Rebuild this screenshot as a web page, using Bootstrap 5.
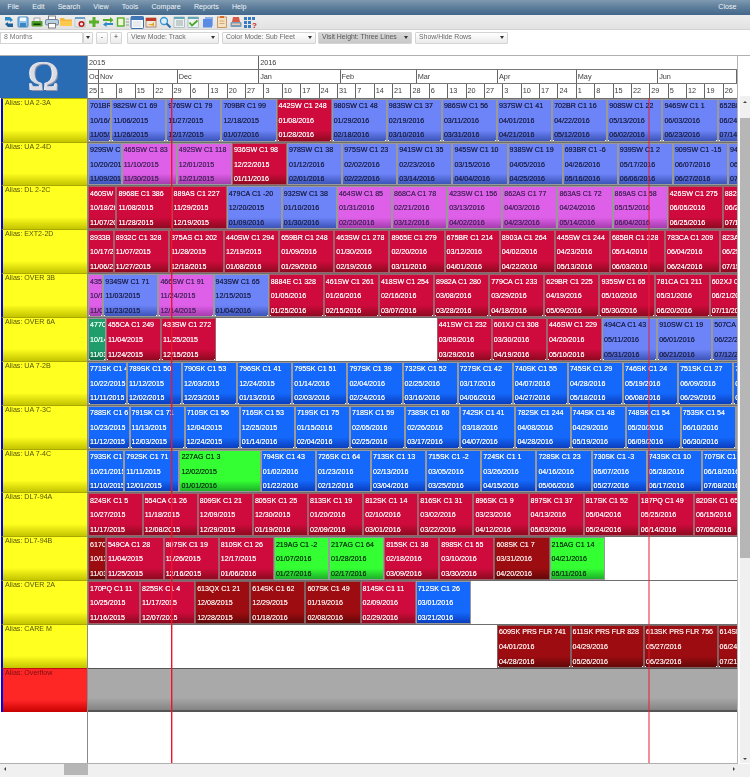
<!DOCTYPE html>
<html lang="en">

<head>
  <meta charset="UTF-8">
  <meta name="viewport" content="width=device-width, initial-scale=1">
  <title>Fleet Plan</title>

  <link href="https://cdn.jsdelivr.net/npm/bootstrap@5.3.0/dist/css/bootstrap.min.css" rel="stylesheet">

  <style>
    html, body {
      margin: 0;
      height: 777px;
      overflow: hidden;
      background: #fff;
      font-family: "Liberation Sans", Arial, sans-serif;
    }

    .app-shell {
      width: 750px;
      height: 777px;
      font-size: 7.1px;
      line-height: 1;
      filter: blur(.2px);
    }

    /* menu + toolbar */
    .menu-bar {
      height: 15px;
      padding: 0 7px 0 1px;
      flex-wrap: nowrap;
      background: linear-gradient(180deg, #7f9ab1 0, #5f7f9c 45%, #43688b 100%);
    }

    .menu-bar a {
      color: #f2f5f8;
      font-size: 7.1px;
      text-decoration: none;
      padding: 0 6.6px;
    }

    .tool-bar {
      height: 15px;
      padding-left: 2px;
      background: linear-gradient(180deg, #eeeeee 0, #e2e2e2 100%);
      border-bottom: 1px solid #d2d2d2;
    }

    .tool-item {
      width: 14.2px;
      height: 14px;
      flex: none;
    }

    .tool-item svg {
      display: block;
      width: 14px;
      height: 14px;
    }

    /* option row */
    .option-bar {
      height: 25px;
      padding-top: 1.5px;
      background: #fff;
    }

    .option-ctl {
      height: 12px;
      padding: 0 3px;
      font-size: 6.9px;
      line-height: 1;
      color: #6a6a6a;
      border: 1px solid #d4d4d4;
      border-radius: 1px;
      background: linear-gradient(180deg, #ffffff 0, #ebebeb 100%);
      flex: none;
    }

    .option-ctl.dropdown-toggle::after {
      border-top: 3px solid #333;
      border-left: 2px solid transparent;
      border-right: 2px solid transparent;
      border-bottom: 0;
      margin-left: 0;
    }

    .option-ctl:hover {
      color: #6a6a6a;
      border-color: #d4d4d4;
    }

    .option-ctl.is-on {
      background: linear-gradient(180deg, #d8d8d8 0, #c8c8c8 100%);
      color: #555;
    }

    .range-input {
      width: 83px;
      height: 12px;
      padding: 0 3px;
      font-size: 6.9px;
      line-height: 1;
      color: #777;
      border: 1px solid #d4d4d4;
      border-radius: 0;
      flex: none;
      display: flex;
      align-items: center;
    }

    .range-arrow { width: 10px; justify-content: center; padding: 0; }
    .step-btn { width: 12px; justify-content: center; padding: 0; color: #333; margin-left: 2px; }
    .step-first { margin-left: 3px; }
    .pick-view { width: 92px; margin-left: 5px; }
    .pick-color { width: 94px; margin-left: 3px; }
    .pick-visit { width: 94px; margin-left: 2px; }
    .pick-rows { width: 93px; margin-left: 3px; }

    /* plan grid */
    .plan-area {
      height: 709px;
      border-top: 1px solid #b0b0b0;
    }

    .plan-grid {
      width: 738px;
      border-right: 1px solid #b4b4b4;
      border-bottom: 1px solid #b0b0b0;
      flex: none;
    }

    .side-col {
      width: 88px;
      flex: none;
      border-right: 1px solid #8a8a8a;
    }

    .omega-cell {
      height: 41.7px;
      background: #2a6cb3;
      color: #dcdde4;
      font-family: "Liberation Serif", "Times New Roman", serif;
      font-size: 42px;
      line-height: 41px;
      text-align: center;
      text-shadow: 1px 1px 0 #8f93a8, -1px 0 0 #f4f4f8;
    }

    .alias-cell {
      height: 43.87px;
      margin-left: 1px;
      padding: 1px 0 0 2px;
      border-left: 2px solid #0000f0;
      border-top: 1px solid #a8a800;
      color: #55550a;
      background: linear-gradient(180deg, #ffff20 0, #ffff20 72%, #c4c400 100%);
      white-space: nowrap;
    }

    .alias-cell.is-overflow {
      color: #7a1010;
      border-top-color: #c01010;
      background: linear-gradient(180deg, #ff2626 0, #ff2626 72%, #c80000 100%);
    }

    .canvas-col {
      width: 649px;
      flex: none;
      overflow: hidden;
    }

    .time-head {
      height: 41.7px;
      color: #3c3c3c;
    }

    .head-line {
      height: 13.9px;
      border-bottom: 1px solid #777;
      position: relative;
      overflow: hidden;
    }

    .head-line:last-child { border-bottom: 0; }

    .head-cell {
      position: absolute;
      top: 0;
      bottom: 0;
      padding: 3px 0 0 1px;
      border-left: 1px solid #666;
      font-size: 7.3px;
      white-space: nowrap;
      overflow: hidden;
    }

    .tracks-box {
      position: relative;
      height: 665px;
    }

    .track-line {
      position: relative;
      height: 43.87px;
      border-top: 1px solid #6e6e6e;
      overflow: hidden;
    }

    .track-line.is-overflow {
      border-top: 1px solid #555;
      border-bottom: 2px solid #555;
      background: linear-gradient(180deg, #a9a9a9 0, #a9a9a9 70%, #848484 100%);
    }

    .visit-box {
      position: absolute;
      top: 0;
      height: 42.87px;
      padding: 3.4px 0 0 1px;
      border: 1px solid #999;
      white-space: nowrap;
      overflow: hidden;
      text-shadow: 0 0 .5px currentColor;
    }

    .visit-box::after {
      content: "";
      position: absolute;
      inset: -1px;
      background:
        linear-gradient(#fff, #fff) left bottom / 2px 1.5px no-repeat,
        linear-gradient(#fff, #fff) right bottom / 2px 1.5px no-repeat,
        linear-gradient(#fff, #fff) left top / 2px 1px no-repeat,
        linear-gradient(#fff, #fff) right top / 2px 1px no-repeat;
    }

    .visit-box div { height: 14.6px; }

    .v-peri { color: #1e2450; background: linear-gradient(180deg, #6c84f8 0, #6c84f8 74%, #3d54b8 100%); }
    .v-pink { color: #4a2560; background: linear-gradient(180deg, #de60e8 0, #de60e8 74%, #a63cae 100%); }
    .v-red { color: #fff2f5; background: linear-gradient(180deg, #ce0b3c 0, #ce0b3c 74%, #8e0a20 100%); border-color: #a0606c; }
    .v-dark { color: #f8e4e4; background: linear-gradient(180deg, #9c0c10 0, #9c0c10 74%, #630808 100%); border-color: #806060; }
    .v-blue { color: #f6faff; background: linear-gradient(180deg, #1468fb 0, #1468fb 74%, #0a3ebd 100%); }
    .v-green { color: #0e4014; background: linear-gradient(180deg, #33ff33 0, #33ff33 74%, #1fb02a 100%); }
    .v-teal { color: #eafff2; background: linear-gradient(180deg, #1f9e6c 0, #1f9e6c 74%, #126a48 100%); }

    .now-line {
      position: absolute;
      top: 0;
      bottom: 0;
      left: 83px;
      width: 1px;
      background: #f01428;
      box-shadow: 1px 0 0 rgba(240, 20, 40, .4);
    }

    .now-line.is-soft {
      left: 560.4px;
      width: 2px;
      background: rgba(232, 30, 56, .5);
      box-shadow: none;
    }

    /* scrollbars */
    .v-scroll {
      width: 10px;
      margin: 40px 0 1px 2px;
      background: #f0f0f0;
      flex: none;
      position: relative;
    }

    .v-thumb {
      position: absolute;
      top: 21.5px;
      left: 0;
      right: 0;
      height: 440px;
      background: #b6b6b6;
    }

    .h-scroll {
      height: 13px;
      background: #f0f0f0;
      position: relative;
    }

    .h-thumb {
      position: absolute;
      top: 0;
      left: 64px;
      width: 24px;
      height: 11px;
      background: #b6b6b6;
    }

    .sb-arrow {
      position: absolute;
      width: 0;
      height: 0;
      border: 2.5px solid transparent;
    }

    .sb-up { top: 3px; left: 2.5px; border-bottom-color: #444; }
    .sb-down { bottom: 1px; left: 2.5px; border-top-color: #444; }
    .sb-left { top: 3px; left: 2px; border-right-color: #444; }
    .sb-right { top: 3px; right: 13px; border-left-color: #444; }
  </style>
</head>

<body>

  <div class="app-shell d-flex flex-column">

    <!-- Menu -->
    <nav class="menu-bar d-flex align-items-center justify-content-between">
      <div class="d-flex">
        <a href="#">File</a>
        <a href="#">Edit</a>
        <a href="#">Search</a>
        <a href="#">View</a>
        <a href="#">Tools</a>
        <a href="#">Compare</a>
        <a href="#">Reports</a>
        <a href="#">Help</a>
      </div>
      <a href="#">Close</a>
    </nav>

    <!-- Toolbar -->
    <div class="tool-bar d-flex align-items-center">
      <span class="tool-item"><svg viewBox="0 0 14 14"><path d="M3 2h5l3 3-3 2V5.500H3z" fill="#2a8ac8"/><path d="M11 12H6L3 9l3-2v1.500h5z" fill="#1f5f9a"/></svg></span>
      <span class="tool-item"><svg viewBox="0 0 14 14"><rect x="2" y="2" width="10" height="10" rx="1" fill="#8cc4ec" stroke="#3f86c0"/><rect x="4" y="2.500" width="6" height="3.500" fill="#f4f8fc"/><rect x="4" y="8" width="6" height="4" fill="#3f86c0"/></svg></span>
      <span class="tool-item"><svg viewBox="0 0 14 14"><rect x="4" y="3" width="6" height="4" fill="#f2f2f2" stroke="#777" stroke-width=".6"/><rect x="1.500" y="6" width="11" height="5.500" rx="1" fill="#4f9e28"/><rect x="3.500" y="8.500" width="7" height="1.500" fill="#153a10"/></svg></span>
      <span class="tool-item"><svg viewBox="0 0 14 14"><rect x="3.500" y="1" width="7" height="4" fill="#fff" stroke="#555" stroke-width=".7"/><rect x=".5" y="4.500" width="13" height="5.500" rx="1.500" fill="#b8cfe0" stroke="#4f6a80" stroke-width=".7"/><rect x="3.500" y="8.500" width="7" height="4.500" fill="#fff" stroke="#555" stroke-width=".7"/></svg></span>
      <span class="tool-item"><svg viewBox="0 0 14 14"><path d="M1 3h4l1 1.500h7V11H1z" fill="#f4b63c"/><rect x="1" y="6" width="12" height="5" fill="#fbc94e"/></svg></span>
      <span class="tool-item"><svg viewBox="0 0 14 14"><rect x="2" y="3" width="10" height="9" fill="#e8e8e8" stroke="#9aa" stroke-width=".5"/><rect x="2" y="2" width="10" height="2" fill="#6aa4cc"/><circle cx="8.500" cy="9" r="2.300" fill="none" stroke="#b81818" stroke-width="1.500"/></svg></span>
      <span class="tool-item"><svg viewBox="0 0 14 14"><path d="M5.500 2h3v3.500H12v3H8.500V12h-3V8.500H2v-3h3.500z" fill="#58b028"/></svg></span>
      <span class="tool-item"><svg viewBox="0 0 14 14"><path d="M2 4h7V2l3.500 3L9 8V6H2z" fill="#58b028"/><path d="M12 8H5.500V6.800L2 9.500 5.500 12v-2H12z" fill="#2a8ac8"/></svg></span>
      <span class="tool-item"><svg viewBox="0 0 14 14"><rect x="1.500" y="3" width="6.500" height="8" fill="#eef8d8" stroke="#58b028" stroke-width="1.400"/><path d="M10 4h3M10 7h3M10 10h3" stroke="#999" stroke-width="1.200"/></svg></span>
      <span class="tool-item"><svg viewBox="0 0 14 14"><rect x="1" y="1.500" width="12.500" height="12" rx="1" fill="#f8f8f8" stroke="#3a6ea8"/><rect x="1" y="1.500" width="12.500" height="3.500" fill="#3f78b8"/><path d="M3 7h8M3 9h8M3 11h8" stroke="#c8d4e0" stroke-width=".7"/></svg></span>
      <span class="tool-item"><svg viewBox="0 0 14 14"><rect x="2" y="3" width="10" height="9" fill="#f0e8d8" stroke="#8a4a20" stroke-width=".6"/><rect x="2" y="3" width="10" height="3" fill="#c23a2a"/><path d="M3 9h5l2-2v4z" fill="#e8a020"/></svg></span>
      <span class="tool-item"><svg viewBox="0 0 14 14"><circle cx="6" cy="6" r="3.500" fill="#d8eefa" stroke="#3a94d0" stroke-width="1.300"/><path d="M8.500 8.500 12.500 12.500" stroke="#2a70b0" stroke-width="2"/></svg></span>
      <span class="tool-item"><svg viewBox="0 0 14 14"><rect x="2" y="2" width="10.500" height="10.500" fill="#eef2f2" stroke="#8aa" stroke-width=".6"/><rect x="2" y="2" width="10.500" height="2" fill="#62a8b8"/><path d="M4 6h7M4 8h7M4 10h7" stroke="#9aa8a8"/></svg></span>
      <span class="tool-item"><svg viewBox="0 0 14 14"><rect x="2" y="2" width="10.500" height="10.500" fill="#eef2f2" stroke="#8aa" stroke-width=".6"/><rect x="2" y="2" width="10.500" height="2" fill="#62a8b8"/><path d="M3.500 7.500 6 10.500 11.500 5.500" fill="none" stroke="#48a828" stroke-width="1.800"/></svg></span>
      <span class="tool-item"><svg viewBox="0 0 14 14"><rect x="4" y="2" width="8" height="9" fill="#8cb0ec"/><rect x="2" y="4" width="9" height="8.500" fill="#5a8ce4"/></svg></span>
      <span class="tool-item"><svg viewBox="0 0 14 14"><rect x="2.500" y="2" width="9" height="10.500" fill="#f6e2c0" stroke="#b87a3a" stroke-width=".7"/><rect x="5" y="1" width="4" height="2" fill="#d86a2a"/><path d="M4.500 6h5M4.500 8.500h5" stroke="#c89a68" stroke-width=".8"/></svg></span>
      <span class="tool-item"><svg viewBox="0 0 14 14"><path d="M4 2h6l1 5H3z" fill="#d85a48"/><rect x="1.500" y="7" width="11" height="5" rx="1" fill="#7a9cb8"/><rect x="3" y="8.500" width="8" height="1.500" fill="#e8c8b0"/></svg></span>
      <span class="tool-item"><svg viewBox="0 0 14 14"><g fill="#3a7ac0"><rect x="1" y="2" width="3" height="3"/><rect x="5" y="2" width="3" height="3"/><rect x="9" y="2" width="3" height="3"/><rect x="1" y="6" width="3" height="3"/><rect x="5" y="6" width="3" height="3"/><rect x="1" y="10" width="3" height="3"/><rect x="5" y="10" width="3" height="3"/></g><text x="9" y="13" font-size="8" font-weight="700" fill="#c82020" font-family="Liberation Sans, sans-serif">?</text></svg></span>
    </div>

    <!-- Options -->
    <div class="option-bar d-flex align-items-start">
      <div class="range-input">8 Months</div>
      <button type="button" class="btn option-ctl range-arrow dropdown-toggle d-flex align-items-center"></button>
      <button type="button" class="btn option-ctl step-btn step-first d-flex align-items-center">-</button>
      <button type="button" class="btn option-ctl step-btn d-flex align-items-center">+</button>
      <button type="button" class="btn option-ctl dropdown-toggle d-flex align-items-center justify-content-between pick-view">View Mode: Track</button>
      <button type="button" class="btn option-ctl dropdown-toggle d-flex align-items-center justify-content-between pick-color">Color Mode: Sub Fleet</button>
      <button type="button" class="btn option-ctl is-on dropdown-toggle d-flex align-items-center justify-content-between pick-visit">Visit Height: Three Lines</button>
      <button type="button" class="btn option-ctl dropdown-toggle d-flex align-items-center justify-content-between pick-rows">Show/Hide Rows</button>
    </div>

    <!-- Plan -->
    <div class="plan-area d-flex">
      <div class="plan-grid d-flex">
        <div class="side-col">
          <div class="omega-cell">&Omega;</div>
          <div id="aliasList"></div>
        </div>
        <div class="canvas-col">
          <div class="time-head">
            <div class="head-line" id="yearLine"></div>
            <div class="head-line" id="monthLine"></div>
            <div class="head-line" id="weekLine"></div>
          </div>
          <div class="tracks-box">
            <div id="trackList"></div>
            <div class="now-line"></div>
            <div class="now-line is-soft"></div>
          </div>
        </div>
      </div>
      <div class="v-scroll">
        <span class="sb-arrow sb-up"></span>
        <div class="v-thumb"></div>
        <span class="sb-arrow sb-down"></span>
      </div>
    </div>

    <div class="h-scroll">
      <span class="sb-arrow sb-left"></span>
      <div class="h-thumb"></div>
      <span class="sb-arrow sb-right"></span>
    </div>
  </div>

  <script src="https://cdn.jsdelivr.net/npm/bootstrap@5.3.0/dist/js/bootstrap.bundle.min.js"></script>

  <script>
    // 21 days come out at 55px, so everything is placed from the dates
    const PX_PER_DAY = 2.625;
    const NOV_1_X = 10;

    const toDay = (text) => {
      const [m, d, y] = text.split('/').map(Number);
      return Date.UTC(y, m - 1, d) / 86400000;
    };
    const toX = (day) => NOV_1_X + (day - toDay('11/01/2015')) * PX_PER_DAY;

    const tracks = [
      { alias: 'UA 2-3A', visits: [
        ['701BR', 'peri', '10/16/2015', '11/05/2015'],
        ['982SW C1 69', 'peri', '11/06/2015', '11/26/2015'],
        ['976SW C1 79', 'peri', '11/27/2015', '12/17/2015'],
        ['709BR C1 99', 'peri', '12/18/2015', '01/07/2016'],
        ['442SW C1 248', 'red', '01/08/2016', '01/28/2016'],
        ['980SW C1 48', 'peri', '01/29/2016', '02/18/2016'],
        ['983SW C1 37', 'peri', '02/19/2016', '03/10/2016'],
        ['986SW C1 56', 'peri', '03/11/2016', '03/31/2016'],
        ['937SW C1 41', 'peri', '04/01/2016', '04/21/2016'],
        ['702BR C1 16', 'peri', '04/22/2016', '05/12/2016'],
        ['908SW C1 22', 'peri', '05/13/2016', '06/02/2016'],
        ['946SW C1 1', 'peri', '06/03/2016', '06/23/2016'],
        ['652BR', 'peri', '06/24/2016', '07/14/2016']
      ] },
      { alias: 'UA 2-4D', visits: [
        ['929SW C', 'peri', '10/20/2015', '11/09/2015'],
        ['465SW C1 83', 'pink', '11/10/2015', '11/30/2015'],
        ['492SW C1 118', 'pink', '12/01/2015', '12/21/2015'],
        ['936SW C1 98', 'red', '12/22/2015', '01/11/2016'],
        ['978SW C1 38', 'peri', '01/12/2016', '02/01/2016'],
        ['975SW C1 23', 'peri', '02/02/2016', '02/22/2016'],
        ['941SW C1 35', 'peri', '02/23/2016', '03/14/2016'],
        ['945SW C1 10', 'peri', '03/15/2016', '04/04/2016'],
        ['938SW C1 19', 'peri', '04/05/2016', '04/25/2016'],
        ['693BR C1 -6', 'peri', '04/26/2016', '05/16/2016'],
        ['939SW C1 2', 'peri', '05/17/2016', '06/06/2016'],
        ['909SW C1 -15', 'peri', '06/07/2016', '06/27/2016'],
        ['948SW', 'peri', '06/28/2016', '07/18/2016']
      ] },
      { alias: 'DL 2-2C', visits: [
        ['460SW C', 'red', '10/18/2015', '11/07/2015'],
        ['8968E C1 386', 'red', '11/08/2015', '11/28/2015'],
        ['889AS C1 227', 'red', '11/29/2015', '12/19/2015'],
        ['479CA C1 -20', 'peri', '12/20/2015', '01/09/2016'],
        ['932SW C1 38', 'peri', '01/10/2016', '01/30/2016'],
        ['464SW C1 85', 'pink', '01/31/2016', '02/20/2016'],
        ['868CA C1 78', 'pink', '02/21/2016', '03/12/2016'],
        ['423SW C1 156', 'pink', '03/13/2016', '04/02/2016'],
        ['862AS C1 77', 'pink', '04/03/2016', '04/23/2016'],
        ['863AS C1 72', 'pink', '04/24/2016', '05/14/2016'],
        ['869AS C1 58', 'pink', '05/15/2016', '06/04/2016'],
        ['426SW C1 275', 'red', '06/05/2016', '06/25/2016'],
        ['8828', 'red', '06/26/2016', '07/16/2016']
      ] },
      { alias: 'EXT2-2D', visits: [
        ['8933B', 'red', '10/17/2015', '11/06/2015'],
        ['8932C C1 328', 'red', '11/07/2015', '11/27/2015'],
        ['375AS C1 202', 'red', '11/28/2015', '12/18/2015'],
        ['440SW C1 294', 'red', '12/19/2015', '01/08/2016'],
        ['659BR C1 248', 'red', '01/09/2016', '01/29/2016'],
        ['463SW C1 278', 'red', '01/30/2016', '02/19/2016'],
        ['8965E C1 279', 'red', '02/20/2016', '03/11/2016'],
        ['675BR C1 214', 'red', '03/12/2016', '04/01/2016'],
        ['8903A C1 264', 'red', '04/02/2016', '04/22/2016'],
        ['445SW C1 244', 'red', '04/23/2016', '05/13/2016'],
        ['685BR C1 228', 'red', '05/14/2016', '06/03/2016'],
        ['783CA C1 209', 'red', '06/04/2016', '06/24/2016'],
        ['823A', 'red', '06/25/2016', '07/15/2016']
      ] },
      { alias: 'OVER 3B', visits: [
        ['435S', 'pink', '10/13/2015', '11/02/2015'],
        ['934SW C1 71', 'peri', '11/03/2015', '11/23/2015'],
        ['466SW C1 91', 'pink', '11/24/2015', '12/14/2015'],
        ['943SW C1 65', 'peri', '12/15/2015', '01/04/2016'],
        ['8884E C1 328', 'red', '01/05/2016', '01/25/2016'],
        ['461SW C1 261', 'red', '01/26/2016', '02/15/2016'],
        ['418SW C1 254', 'red', '02/16/2016', '03/07/2016'],
        ['8982A C1 280', 'red', '03/08/2016', '03/28/2016'],
        ['779CA C1 233', 'red', '03/29/2016', '04/18/2016'],
        ['629BR C1 225', 'red', '04/19/2016', '05/09/2016'],
        ['935SW C1 65', 'red', '05/10/2016', '05/30/2016'],
        ['781CA C1 211', 'red', '05/31/2016', '06/20/2016'],
        ['602XJ C', 'red', '06/21/2016', '07/11/2016']
      ] },
      { alias: 'OVER 6A', visits: [
        ['477C', 'teal', '10/14/2015', '11/03/2015'],
        ['455CA C1 249', 'red', '11/04/2015', '11/24/2015'],
        ['433SW C1 272', 'red', '11/25/2015', '12/15/2015'],
        ['441SW C1 232', 'red', '03/09/2016', '03/29/2016'],
        ['601XJ C1 308', 'red', '03/30/2016', '04/19/2016'],
        ['446SW C1 229', 'red', '04/20/2016', '05/10/2016'],
        ['494CA C1 43', 'peri', '05/11/2016', '05/31/2016'],
        ['910SW C1 19', 'peri', '06/01/2016', '06/21/2016'],
        ['507CA', 'peri', '06/22/2016', '07/12/2016']
      ] },
      { alias: 'UA 7-2B', visits: [
        ['771SK C1 4', 'blue', '10/22/2015', '11/11/2015'],
        ['789SK C1 50', 'blue', '11/12/2015', '12/02/2015'],
        ['790SK C1 53', 'blue', '12/03/2015', '12/23/2015'],
        ['796SK C1 41', 'blue', '12/24/2015', '01/13/2016'],
        ['795SK C1 51', 'blue', '01/14/2016', '02/03/2016'],
        ['797SK C1 39', 'blue', '02/04/2016', '02/24/2016'],
        ['732SK C1 52', 'blue', '02/25/2016', '03/16/2016'],
        ['727SK C1 42', 'blue', '03/17/2016', '04/06/2016'],
        ['740SK C1 55', 'blue', '04/07/2016', '04/27/2016'],
        ['745SK C1 29', 'blue', '04/28/2016', '05/18/2016'],
        ['746SK C1 24', 'blue', '05/19/2016', '06/08/2016'],
        ['751SK C1 27', 'blue', '06/09/2016', '06/29/2016'],
        ['7', 'blue', '06/30/2016', '07/20/2016']
      ] },
      { alias: 'UA 7-3C', visits: [
        ['788SK C1 6', 'blue', '10/23/2015', '11/12/2015'],
        ['791SK C1 71', 'blue', '11/13/2015', '12/03/2015'],
        ['710SK C1 56', 'blue', '12/04/2015', '12/24/2015'],
        ['716SK C1 53', 'blue', '12/25/2015', '01/14/2016'],
        ['719SK C1 75', 'blue', '01/15/2016', '02/04/2016'],
        ['718SK C1 59', 'blue', '02/05/2016', '02/25/2016'],
        ['738SK C1 60', 'blue', '02/26/2016', '03/17/2016'],
        ['742SK C1 41', 'blue', '03/18/2016', '04/07/2016'],
        ['782SK C1 244', 'blue', '04/08/2016', '04/28/2016'],
        ['744SK C1 48', 'blue', '04/29/2016', '05/19/2016'],
        ['748SK C1 54', 'blue', '05/20/2016', '06/09/2016'],
        ['753SK C1 54', 'blue', '06/10/2016', '06/30/2016'],
        ['', 'blue', '07/01/2016', '07/21/2016']
      ] },
      { alias: 'UA 7-4C', visits: [
        ['793SK C1', 'blue', '10/21/2015', '11/10/2015'],
        ['792SK C1 71', 'blue', '11/11/2015', '12/01/2015'],
        ['227AG C1 3', 'green', '12/02/2015', '01/01/2016'],
        ['794SK C1 43', 'blue', '01/02/2016', '01/22/2016'],
        ['726SK C1 64', 'blue', '01/23/2016', '02/12/2016'],
        ['713SK C1 13', 'blue', '02/13/2016', '03/04/2016'],
        ['715SK C1 -2', 'blue', '03/05/2016', '03/25/2016'],
        ['724SK C1 1', 'blue', '03/26/2016', '04/15/2016'],
        ['728SK C1 23', 'blue', '04/16/2016', '05/06/2016'],
        ['730SK C1 -3', 'blue', '05/07/2016', '05/27/2016'],
        ['743SK C1 10', 'blue', '05/28/2016', '06/17/2016'],
        ['707SK C1 2', 'blue', '06/18/2016', '07/08/2016']
      ] },
      { alias: 'DL7-94A', visits: [
        ['824SK C1 5', 'red', '10/27/2015', '11/17/2015'],
        ['554CA C1 26', 'red', '11/18/2015', '12/08/2015'],
        ['809SK C1 21', 'red', '12/09/2015', '12/29/2015'],
        ['805SK C1 25', 'red', '12/30/2015', '01/19/2016'],
        ['813SK C1 19', 'red', '01/20/2016', '02/09/2016'],
        ['812SK C1 14', 'red', '02/10/2016', '03/01/2016'],
        ['816SK C1 31', 'red', '03/02/2016', '03/22/2016'],
        ['896SK C1 9', 'red', '03/23/2016', '04/12/2016'],
        ['897SK C1 37', 'red', '04/13/2016', '05/03/2016'],
        ['817SK C1 52', 'red', '05/04/2016', '05/24/2016'],
        ['187PQ C1 49', 'red', '05/25/2016', '06/14/2016'],
        ['820SK C1 65', 'red', '06/15/2016', '07/05/2016']
      ] },
      { alias: 'DL7-94B', visits: [
        ['617C', 'dark', '10/13/2015', '11/03/2015'],
        ['549CA C1 28', 'red', '11/04/2015', '11/25/2015'],
        ['807SK C1 19', 'red', '11/26/2015', '12/16/2015'],
        ['810SK C1 26', 'red', '12/17/2015', '01/06/2016'],
        ['219AG C1 -2', 'green', '01/07/2016', '01/27/2016'],
        ['217AG C1 64', 'green', '01/28/2016', '02/17/2016'],
        ['815SK C1 38', 'red', '02/18/2016', '03/09/2016'],
        ['898SK C1 55', 'red', '03/10/2016', '03/30/2016'],
        ['608SK C1 7', 'dark', '03/31/2016', '04/20/2016'],
        ['215AG C1 14', 'green', '04/21/2016', '05/11/2016']
      ] },
      { alias: 'OVER 2A', visits: [
        ['170PQ C1 11', 'red', '10/25/2015', '11/16/2015'],
        ['825SK C1 4', 'red', '11/17/2015', '12/07/2015'],
        ['613QX C1 21', 'dark', '12/08/2015', '12/28/2015'],
        ['614SK C1 62', 'dark', '12/29/2015', '01/18/2016'],
        ['607SK C1 49', 'dark', '01/19/2016', '02/08/2016'],
        ['814SK C1 11', 'red', '02/09/2016', '02/29/2016'],
        ['712SK C1 26', 'blue', '03/01/2016', '03/21/2016']
      ] },
      { alias: 'CARE M', visits: [
        ['609SK PRS FLR 741', 'dark', '04/01/2016', '04/28/2016'],
        ['611SK PRS FLR 828', 'dark', '04/29/2016', '05/26/2016'],
        ['613SK PRS FLR 756', 'dark', '05/27/2016', '06/23/2016'],
        ['614SK', 'dark', '06/24/2016', '07/21/2016']
      ] },
      { alias: 'Overflow', overflow: true, visits: [] }
    ];

    const showTracks = () => {
      const aliasList = document.getElementById('aliasList');
      const trackList = document.getElementById('trackList');

      tracks.forEach(track => {
        const extra = track.overflow ? ' is-overflow' : '';
        aliasList.innerHTML += `<div class="alias-cell${extra}">Alias: ${track.alias}</div>`;

        let boxes = '';
        track.visits.forEach(([name, kind, start, end]) => {
          const left = toX(toDay(start));
          const right = toX(toDay(end) + 1);
          // visits that began before the window are cut at its edge, text included
          const x = Math.max(left, 0);
          boxes += `
            <div class="visit-box v-${kind}" style="left:${x}px;width:${right - x}px">
              <div>${name}</div>
              <div>${start}</div>
              <div>${end}</div>
            </div>`;
        });
        trackList.innerHTML += `<div class="track-line${extra}">${boxes}</div>`;
      });
    };

    const showHeader = () => {
      const cell = (x, endX, label) =>
        `<div class="head-cell" style="left:${Math.max(x, -1)}px;width:${endX - Math.max(x, -1)}px">${label}</div>`;

      document.getElementById('yearLine').innerHTML =
        cell(-1, toX(toDay('01/01/2016')), '2015') + cell(toX(toDay('01/01/2016')), 700, '2016');

      const months = [
        ['Oct', '10/01/2015'], ['Nov', '11/01/2015'], ['Dec', '12/01/2015'], ['Jan', '01/01/2016'],
        ['Feb', '02/01/2016'], ['Mar', '03/01/2016'], ['Apr', '04/01/2016'], ['May', '05/01/2016'],
        ['Jun', '06/01/2016'], ['Jul', '07/01/2016']
      ];
      document.getElementById('monthLine').innerHTML = months.map(([label, date], i) => {
        const next = months[i + 1] ? toX(toDay(months[i + 1][1])) : 700;
        return cell(toX(toDay(date)), next, label);
      }).join('');

      let weeks = '';
      for (let day = toDay('11/01/2015') - 7; toX(day) < 649; day += 7) {
        weeks += cell(toX(day), toX(day + 7), new Date(day * 86400000).getUTCDate());
      }
      document.getElementById('weekLine').innerHTML = weeks;
    };

    showHeader();
    showTracks();
  </script>
</body>

</html>
